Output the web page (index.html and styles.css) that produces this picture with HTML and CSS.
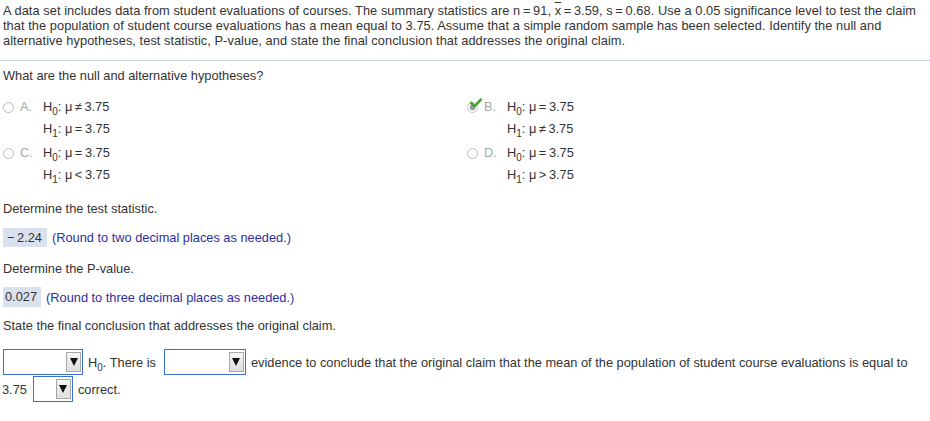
FILE: index.html
```html
<!DOCTYPE html>
<html>
<head>
<meta charset="utf-8">
<link rel="stylesheet" href="styles.css">
</head>
<body>
<div class="page">
  <p class="intro">A data set includes data from student evaluations of courses. The summary statistics are n&#8201;=&#8201;91, <span class="xbar">x</span>&#8201;=&#8201;3.59, s&#8201;=&#8201;0.68. Use a 0.05 significance level to test the claim that the population of student course evaluations has a mean equal to 3.75. Assume that a simple random sample has been selected. Identify the null and alternative hypotheses, test statistic, P-value, and state the final conclusion that addresses the original claim.</p>
  <hr class="sep">
  <p class="q q-first">What are the null and alternative hypotheses?</p>
  <div class="options">
    <div class="opt">
      <span class="radio"></span><span class="letter">A.</span>
      <div class="hyp">
        <div>H<sub>0</sub>: μ&#8201;≠&#8201;3.75</div>
        <div>H<sub>1</sub>: μ&#8201;=&#8201;3.75</div>
      </div>
    </div>
    <div class="opt">
      <span class="radio sel"><svg class="check" viewBox="0 0 12 10" width="12" height="10"><path d="M1.3 5 L4.5 8.3 L10.8 1.6" fill="none" stroke="#3fa62a" stroke-width="2.6" stroke-linecap="round" stroke-linejoin="round"/></svg></span><span class="letter">B.</span>
      <div class="hyp">
        <div>H<sub>0</sub>: μ&#8201;=&#8201;3.75</div>
        <div>H<sub>1</sub>: μ&#8201;≠&#8201;3.75</div>
      </div>
    </div>
    <div class="opt">
      <span class="radio"></span><span class="letter">C.</span>
      <div class="hyp">
        <div>H<sub>0</sub>: μ&#8201;=&#8201;3.75</div>
        <div>H<sub>1</sub>: μ&#8201;&lt;&#8201;3.75</div>
      </div>
    </div>
    <div class="opt">
      <span class="radio"></span><span class="letter">D.</span>
      <div class="hyp">
        <div>H<sub>0</sub>: μ&#8201;=&#8201;3.75</div>
        <div>H<sub>1</sub>: μ&#8201;&gt;&#8201;3.75</div>
      </div>
    </div>
  </div>

  <p class="q q-stat">Determine the test statistic.</p>
  <div class="answer a1"><span class="box">−&#8201;2.24</span><span class="hint">(Round to two decimal places as needed.)</span></div>

  <p class="q q-p">Determine the P-value.</p>
  <div class="answer a2"><span class="box">0.027</span><span class="hint">(Round to three decimal places as needed.)</span></div>

  <p class="q q-state">State the final conclusion that addresses the original claim.</p>
  <div class="concl">
    <div class="cline">
      <span class="dd w80"><span class="arrow"></span></span>
      <span class="t">H<sub>0</sub>. There is</span>
      <span class="dd w82"><span class="arrow"></span></span>
      <span class="t">evidence to conclude that the original claim that the mean of the population of student course evaluations is equal to</span>
    </div>
    <div class="cline">
      <span class="t first">3.75</span>
      <span class="dd w40"><span class="arrow"></span></span>
      <span class="t">correct.</span>
    </div>
  </div>
</div>
</body>
</html>
```

FILE: styles.css
```css
html, body {
  margin: 0;
  padding: 0;
  background: #ffffff;
}
body {
  font-family: "Liberation Sans", Arial, sans-serif;
  font-size: 12.8px;
  color: #333333;
}
.page {
  padding: 3px 3px 0 3px;
}
p {
  margin: 0;
}
.intro {
  line-height: 15px;
  letter-spacing: 0.06px;
}
.xbar {
  text-decoration: overline;
}
.sep {
  border: 0;
  border-top: 1px solid #c9cfe0;
  height: 0;
  margin: 12px -3px 0 -3px;
}
.q {
  line-height: 15px;
}
.q-first { margin-top: 7px; }
.options {
  margin-top: 13px;
  display: grid;
  grid-template-columns: 464px 1fr;
  row-gap: 2px;
}
.opt {
  display: flex;
  align-items: flex-start;
}
.radio {
  position: relative;
  display: inline-block;
  box-sizing: border-box;
  width: 11px;
  height: 11px;
  border: 1px solid #b9b9b9;
  border-radius: 50%;
  background: #fff;
  margin-top: 6px;
  flex: none;
}
.radio.sel {
  border-color: #c4c4c4;
  background: radial-gradient(circle, #9a9a9a 0 2.6px, #ffffff 3.2px);
}
.check {
  position: absolute;
  left: 2px;
  top: -5px;
}
.letter {
  color: #a8a8a8;
  margin-left: 6px;
  width: 23px;
  line-height: 22px;
  flex: none;
}
.hyp {
  line-height: 22px;
}
sub {
  font-size: 10px;
  vertical-align: -4px;
  line-height: 0;
}
.q-stat { margin-top: 15px; }
.answer {
  display: flex;
  align-items: center;
  line-height: 15px;
}
.a1 { margin-top: 12px; }
.a2 { margin-top: 11px; }
.box {
  background: #d9e1ef;
  padding: 2px 5px 2px 4px;
  color: #333;
}
.a2 .box {
  padding: 2px 4px 3px 2px;
}
.hint {
  color: #2b2f9f;
  margin-left: 5px;
}
.q-p { margin-top: 14px; }
.q-state { margin-top: 11px; }
.concl {
  margin-top: 16px;
}
.cline {
  display: flex;
  align-items: center;
  height: 26px;
  white-space: nowrap;
}
.cline + .cline {
  margin-top: 1px;
}
.t {
  margin-left: 5px;
  margin-right: 6px;
}
.cline .t:nth-child(2) {
  margin-right: 8px;
}
.t.first {
  margin-left: -1px;
}
.dd {
  box-sizing: border-box;
  height: 26px;
  border: 1px solid #3a6fd6;
  background: #fff;
  display: flex;
  align-items: center;
  justify-content: flex-end;
  padding-right: 1px;
  flex: none;
}
.w80 { width: 80px; }
.w82 { width: 82px; }
.w40 { width: 40px; }
.arrow {
  box-sizing: border-box;
  width: 15px;
  height: 20px;
  border: 1px solid #a7a7a7;
  background: linear-gradient(#f6f6f6, #dedede);
  display: flex;
  align-items: center;
  justify-content: center;
}
.arrow::after {
  content: "";
  width: 0;
  height: 0;
  border-left: 4px solid transparent;
  border-right: 4px solid transparent;
  border-top: 8px solid #111;
}
```
